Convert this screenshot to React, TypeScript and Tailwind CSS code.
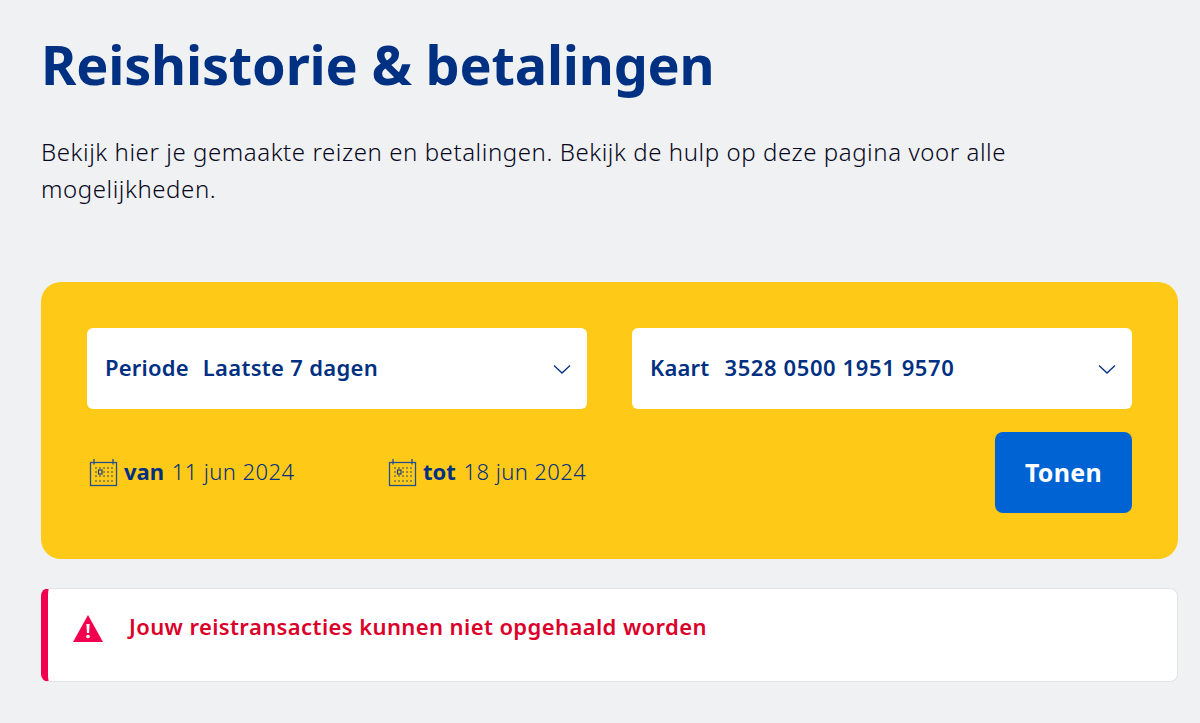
const font = "font-['Noto_Sans',sans-serif]";

const CalendarIcon = () => (
  <svg width="29" height="29" viewBox="0 0 29 29" className="-mt-[1px] shrink-0" fill="none">
    <rect x="1.5" y="4.5" width="26" height="23" stroke="#24508f" strokeWidth="1.3" />
    <path d="M5 1v5.5M24 1v5.5" stroke="#24508f" strokeWidth="1.3" />
    <g fill="#4a5560">
      {[7, 11, 15, 19, 23].flatMap((x) =>
        [10, 14, 18, 23].map((y) => <rect key={`${x}-${y}`} x={x - 0.75} y={y - 0.75} width="1.5" height="1.5" />),
      )}
    </g>
    <rect x="9.5" y="12" width="3.5" height="4" fill="#ffc917" stroke="#1c3f80" strokeWidth="1.2" />
  </svg>
);

const Chevron = () => (
  <svg width="18" height="10" viewBox="0 0 18 10" fill="none" className="shrink-0">
    <path d="M1 1.5l8 7.5 8-7.5" stroke="#003082" strokeWidth="1.3" />
  </svg>
);

const Select = ({ label, value, valueClass }: { label: string; value: string; valueClass: string }) => (
  <div className="flex h-[81px] flex-1 items-center justify-between rounded-md bg-white pl-[18px] pr-[16px] text-[22px] font-semibold tracking-[0.2px] text-[#003082]">
    <span className="-mt-[2px]">
      {label}
      <span className={valueClass}>{value}</span>
    </span>
    <Chevron />
  </div>
);

const DateField = ({ label, value }: { label: string; value: string }) => (
  <div className="flex items-center gap-[6px] text-[22px] text-[#003082]">
    <CalendarIcon />
    <span className="-mt-[2px]">
      <span className="font-bold">{label}</span> <span className="ml-[2px] font-light tracking-[0.4px]">{value}</span>
    </span>
  </div>
);

export default function App() {
  return (
    <div className={`${font} h-[723px] overflow-hidden bg-[#f0f1f3] pl-[41px] pr-[22px]`}>
      <h1 className="pt-[24px] text-[54px] font-bold leading-[80px] tracking-[-0.2px] text-[#003082]">Reishistorie &amp; betalingen</h1>
      <p className="mt-[29px] h-[149px] max-w-[1000px] text-[24px] font-light leading-[37px] tracking-[0.57px] text-[#070721]">
        Bekijk hier je gemaakte reizen en betalingen. Bekijk de hulp op deze pagina voor alle mogelijkheden.
      </p>

      <div className="h-[277px] rounded-[20px] bg-[#ffc917] px-[46px] pt-[46px]">
        <div className="flex gap-[45px]">
          <Select label="Periode" value="Laatste 7 dagen" valueClass="ml-[14px] tracking-[0.3px]" />
          <Select label="Kaart" value="3528 0500 1951 9570" valueClass="ml-[15px] tracking-[0.6px]" />
        </div>
        <div className="mt-[23px] flex items-center">
          <div className="flex w-[301px] pl-[2px]">
            <DateField label="van" value="11 jun 2024" />
          </div>
          <DateField label="tot" value="18 jun 2024" />
          <button className="ml-auto h-[81px] w-[137px] rounded-lg bg-[#0063d3] text-[25px] font-bold tracking-[0.3px] text-white">Tonen</button>
        </div>
      </div>

      <div className="mt-[29px] flex h-[94px] rounded-lg border border-[#e2e3e6] border-l-[7px] border-l-[#f0004f] bg-white pl-[25px] pt-[22px]">
        <svg width="30" height="27" viewBox="0 0 30 27" className="mt-[4px] shrink-0">
          <path d="M15 0L30 27H0z" fill="#f0004f" />
          <path d="M13.4 9h3.2l-.5 9h-2.2z" fill="#fff" />
          <circle cx="15" cy="21.5" r="1.8" fill="#fff" />
        </svg>
        <span className="ml-[26px] -mt-[2px] text-[22px] font-semibold leading-[34px] tracking-[0.4px] text-[#db0029]">
          Jouw reistransacties kunnen niet opgehaald worden
        </span>
      </div>
    </div>
  );
}
